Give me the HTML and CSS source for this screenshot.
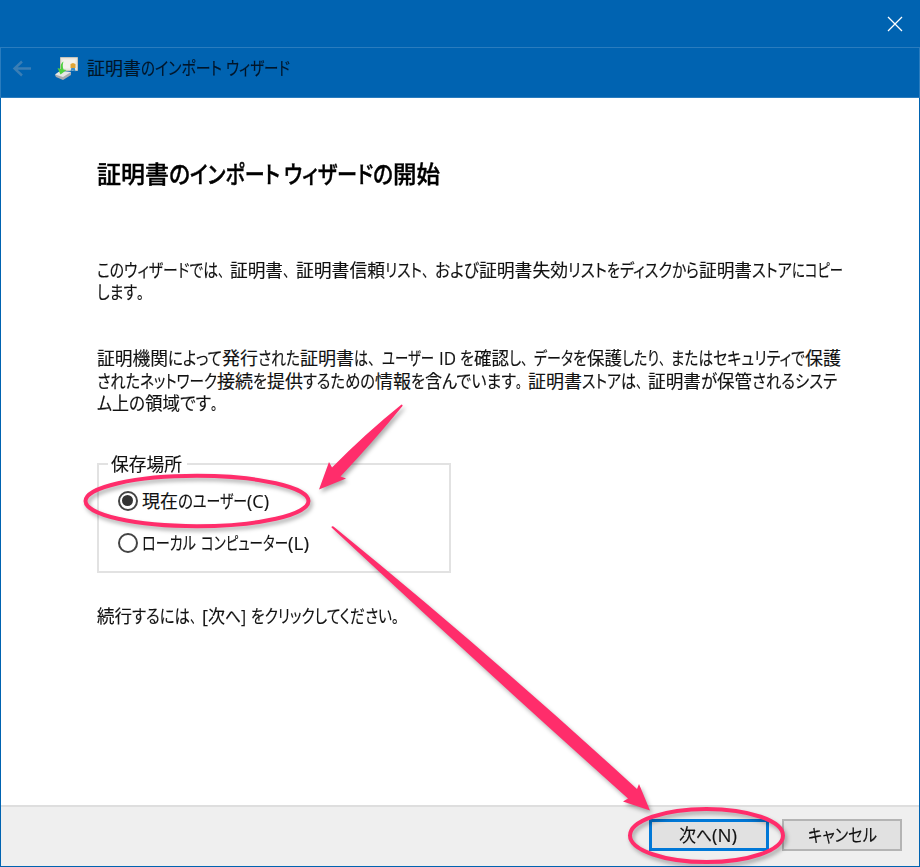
FILE: index.html
```html
<!DOCTYPE html>
<html lang="ja">
<head>
<meta charset="utf-8">
<title>証明書のインポート ウィザード</title>
<link rel="stylesheet" href="styles.css">
</head>
<body>
<div class="window">
  <div class="titlebar">
    <svg class="close" width="16" height="16" viewBox="0 0 16 16"><path d="M1 1l14 14M15 1L1 15"/></svg>
  </div>
  <header class="header">
    <svg class="back" width="20" height="18" viewBox="0 0 20 18"><path d="M19 8.500H3M10 1.500L2.500 8.500 10 15.500"/></svg>
    <svg class="cert" width="26" height="26" viewBox="0 0 26 26">
      <path d="M6.500 1.500h17v13h-17z" fill="#e9e6dc" stroke="#c5c4bb"/>
      <path d="M8.500 3.500h13v9h-13z" fill="#f4f2ec"/>
      <path d="M17.500 11l-1 4.500 2-1 3 1-1-5z" fill="#3a8fce"/>
      <path d="M16.500 8l2.500-1 2.500 1v4h-5z" fill="#e0a536"/>
      <path d="M1 19l5-4 11 1v3l-8 5-7-3z" fill="#a9acae"/>
      <path d="M1 18.500l5-3.500 11 1-8 5z" fill="#e6e7e6"/>
      <path d="M9.500 5.500c-3 2-3 5-2.500 7.500l-3.500-1 3 6.500 6-4.500-3-.5c-1-3-1-5 0-8z" fill="#4fd03f"/>
    </svg>
    <div class="row caption"><span data-w="54">証明書</span><span data-w="14">の</span><span data-w="67">インポート</span><span data-w="4"> </span><span data-w="64">ウィザード</span></div>
  </header>
  <main class="content">
    <h1 class="row heading"><span data-w="72">証明書</span><span data-w="21">の</span><span data-w="90">インポート</span><span data-w="4"> </span><span data-w="89">ウィザード</span><span data-w="20">の</span><span data-w="47">開始</span></h1>
    <div class="para intro">
      <div class="row"><span data-w="121">このウィザードでは</span><span class="stop" data-w="12">、</span><span data-w="53">証明書</span><span class="stop" data-w="13">、</span><span data-w="89">証明書信頼</span><span data-w="37">リスト</span><span class="stop" data-w="13">、</span><span data-w="44">および</span><span data-w="89">証明書失効</span><span data-w="39">リスト</span><span data-w="13">を</span><span data-w="52">ディスク</span><span data-w="27">から</span><span data-w="53">証明書</span><span data-w="40">ストア</span><span data-w="13">に</span><span data-w="38">コピー</span></div>
      <div class="row"><span data-w="40">します</span><span class="stop" data-w="14">。</span></div>
    </div>
    <div class="para about">
      <div class="row"><span data-w="71">証明機関</span><span data-w="54">によって</span><span data-w="36">発行</span><span data-w="42">された</span><span data-w="54">証明書</span><span data-w="14">は</span><span class="stop" data-w="14">、</span><span data-w="52">ユーザー</span><span data-w="5"> </span><span data-w="17">ID</span><span data-w="4"> </span><span data-w="14">を</span><span data-w="35">確認</span><span data-w="12">し</span><span class="stop" data-w="13">、</span><span data-w="39">データ</span><span data-w="14">を</span><span data-w="35">保護</span><span data-w="37">したり</span><span class="stop" data-w="12">、</span><span data-w="42">または</span><span data-w="92">セキュリティで</span><span data-w="36">保護</span></div>
      <div class="row"><span data-w="43">された</span><span data-w="77">ネットワーク</span><span data-w="36">接続</span><span data-w="14">を</span><span data-w="36">提供</span><span data-w="72">するための</span><span data-w="36">情報</span><span data-w="14">を</span><span data-w="17">含</span><span data-w="74">んでいます</span><span class="stop" data-w="12">。</span><span data-w="54">証明書</span><span data-w="39">ストア</span><span data-w="15">は</span><span class="stop" data-w="12">、</span><span data-w="53">証明書</span><span data-w="16">が</span><span data-w="35">保管</span><span data-w="43">される</span><span data-w="42">システ</span></div>
      <div class="row"><span data-w="15">ム</span><span data-w="17">上</span><span data-w="16">の</span><span data-w="35">領域</span><span data-w="31">です</span><span class="stop" data-w="13">。</span></div>
    </div>
    <div class="group">
      <div class="row legend"><span data-w="71">保存場所</span></div>
      <div class="option"><i class="radio checked"></i><div class="row"><span data-w="36">現在</span><span data-w="15">の</span><span data-w="54">ユーザー</span><span data-w="22">(C)</span></div></div>
      <div class="option"><i class="radio"></i><div class="row"><span data-w="54">ローカル</span><span data-w="5"> </span><span data-w="87">コンピューター</span><span data-w="21">(L)</span></div></div>
    </div>
    <div class="row next-hint"><span data-w="35">続行</span><span data-w="58">するには</span><span class="stop" data-w="12">、</span><span data-w="6">[</span><span data-w="17">次</span><span data-w="16">へ</span><span data-w="5">]</span><span data-w="5"> </span><span data-w="141">をクリックしてください</span><span class="stop" data-w="14">。</span></div>
  </main>
  <footer class="footer">
    <div class="button primary"><div class="row"><span data-w="17">次</span><span data-w="16">へ</span><span data-w="25">(N)</span></div></div>
    <div class="button"><div class="row"><span data-w="69">キャンセル</span></div></div>
  </footer>
  <svg class="marks" width="920" height="867" viewBox="0 0 920 867">
    <ellipse cx="197" cy="501" rx="111.500" ry="25.200"/>
    <ellipse cx="706.500" cy="835.500" rx="76.500" ry="26.500"/>
    <path d="M401.500 404.500Q403 404.500 402.500 406Q373 442 340.500 476.500L346 478.500 319 489.500 329 462 332 467.500Q366 433 401.500 404.500z"/>
    <path d="M331.500 527.500Q331.500 525.500 333.500 526.500Q490 654 637 789L639 784 650 810.500 623 801.500 628 798.500Q480 666 331.500 527.500z"/>
  </svg>
</div>
<script src="fit.js"></script>
</body>
</html>
```
FILE: styles.css
```css
* { box-sizing: border-box; }
body { margin: 0; width: 920px; height: 867px; overflow: hidden; font-family: "Open Sans", "Noto Sans CJK JP", sans-serif; font-size: 18px; color: #111; }
.window { position: relative; width: 920px; height: 867px; display: flex; flex-direction: column; background: #0063b1; }
.titlebar { height: 47px; display: flex; justify-content: flex-end; padding: 15.5px 17.5px 0 0; }
.close path { stroke: #fff; stroke-width: 1.3; fill: none; }
.header { height: 51px; border: 1px solid #2a7cbe; display: flex; align-items: center; padding: 0 0 8px 11px; }
.back { fill: none; stroke: #3a7eb5; stroke-width: 2.4; }
.cert { margin-left: 22px; }
.caption { margin-left: 7px; color: #001528; }
.content { height: 707px; margin: 0 1px; padding: 62px 0 0 96px; background: #fff; }
.row { display: flex; height: 22.4px; line-height: 22.4px; white-space: pre; font-feature-settings: "palt"; -webkit-text-stroke: .15px currentColor; }
.row > span { display: block; flex: none; }
.row > .stop { font-feature-settings: normal; }
.row b { display: inline-block; font-weight: inherit; transform-origin: 0 50%; }
.heading { margin: 0; height: 28px; line-height: 28px; font-size: 23.7px; font-weight: 500; color: #000; -webkit-text-stroke: .4px #000; }
.intro { margin-top: 71px; }
.about { margin-top: 43.6px; }
.group { width: 354px; height: 110px; margin-top: 48.5px; border: 2px solid #e2e2e2; padding-left: 18.5px; }
.legend { width: 79px; margin: -12px 0 0 -9.5px; padding-left: 3px; background: #fff; }
.option { display: flex; align-items: center; height: 22px; margin-top: 14.5px; }
.option + .option { margin-top: 20px; }
.radio { width: 20px; height: 20px; border: 2px solid #444; border-radius: 50%; margin-right: 4.5px; display: flex; align-items: center; justify-content: center; background: #fff; }
.checked::after { content: ""; width: 11px; height: 11px; border-radius: 50%; background: #333; }
.next-hint { margin-top: 31.5px; }
.footer { height: 61px; margin: 0 1px; border-top: 2px solid #dedede; background: #efefef; display: flex; justify-content: flex-end; gap: 13px; padding: 12px 17px 0 0; }
.button { width: 120px; height: 32px; border: 2px solid #b4b4b4; background: #e1e1e1; display: flex; align-items: center; justify-content: center; }
.primary { border: 3px solid #0078d7; padding-right: 2px; }
.marks { position: absolute; left: 0; top: 0; filter: drop-shadow(2px 3px 2px rgba(0,0,0,.32)); }
.marks path { fill: #ff2d6b; }
.marks ellipse { fill: none; stroke: #ff2d6b; stroke-width: 4; }
```
FILE: fit.js
```js
// Condense each run of text to the advance width given in data-w.
for (const run of document.querySelectorAll("[data-w]")) {
  const inner = document.createElement("b");
  inner.textContent = run.textContent;
  run.textContent = "";
  run.append(inner);
  const natural = inner.getBoundingClientRect().width;
  run.style.width = run.dataset.w + "px";
  if (natural) inner.style.transform = `scaleX(${run.dataset.w / natural})`;
}
```
